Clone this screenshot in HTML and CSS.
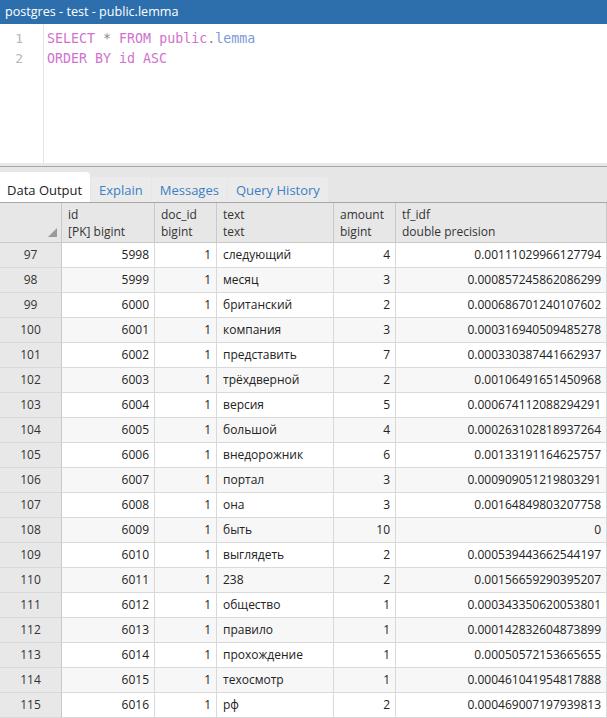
FILE: index.html
```html
<!DOCTYPE html>
<html>
<head>
<meta charset="utf-8">
<link rel="stylesheet" href="styles.css">
</head>
<body>
<div class="title">postgres - test - public.lemma</div>
<div class="editor">
  <div class="gutter"><div>1</div><div>2</div></div>
  <div class="code">
    <div class="line"><span class="kw">SELECT</span> <span class="op">*</span> <span class="kw">FROM</span> <span class="kw">public</span><span class="op">.</span><span class="ident">lemma</span></div>
    <div class="line"><span class="kw">ORDER</span> <span class="kw">BY</span> <span class="kw">id</span> <span class="kw">ASC</span></div>
  </div>
</div>
<div class="sep"></div>
<div class="tabs">
  <div class="tab active">Data Output</div>
  <div class="tab">Explain</div>
  <div class="tab">Messages</div>
  <div class="tab">Query History</div>
</div>
<div class="grid">
  <div class="row head">
    <div class="c corner"><svg width="9" height="9" viewBox="0 0 9 9"><polygon points="9,0 9,9 0,9" fill="#9a9a9a"/></svg></div>
    <div class="c"><div>id</div><div>[PK] bigint</div></div>
    <div class="c"><div>doc_id</div><div>bigint</div></div>
    <div class="c"><div>text</div><div>text</div></div>
    <div class="c"><div>amount</div><div>bigint</div></div>
    <div class="c"><div>tf_idf</div><div>double precision</div></div>
  </div>
  <div class="row"><div class="c n">97</div><div class="c r">5998</div><div class="c r">1</div><div class="c">следующий</div><div class="c r">4</div><div class="c r">0.00111029966127794</div></div>
  <div class="row alt"><div class="c n">98</div><div class="c r">5999</div><div class="c r">1</div><div class="c">месяц</div><div class="c r">3</div><div class="c r">0.000857245862086299</div></div>
  <div class="row"><div class="c n">99</div><div class="c r">6000</div><div class="c r">1</div><div class="c">британский</div><div class="c r">2</div><div class="c r">0.000686701240107602</div></div>
  <div class="row alt"><div class="c n">100</div><div class="c r">6001</div><div class="c r">1</div><div class="c">компания</div><div class="c r">3</div><div class="c r">0.000316940509485278</div></div>
  <div class="row"><div class="c n">101</div><div class="c r">6002</div><div class="c r">1</div><div class="c">представить</div><div class="c r">7</div><div class="c r">0.000330387441662937</div></div>
  <div class="row alt"><div class="c n">102</div><div class="c r">6003</div><div class="c r">1</div><div class="c">трёхдверной</div><div class="c r">2</div><div class="c r">0.00106491651450968</div></div>
  <div class="row"><div class="c n">103</div><div class="c r">6004</div><div class="c r">1</div><div class="c">версия</div><div class="c r">5</div><div class="c r">0.000674112088294291</div></div>
  <div class="row alt"><div class="c n">104</div><div class="c r">6005</div><div class="c r">1</div><div class="c">большой</div><div class="c r">4</div><div class="c r">0.000263102818937264</div></div>
  <div class="row"><div class="c n">105</div><div class="c r">6006</div><div class="c r">1</div><div class="c">внедорожник</div><div class="c r">6</div><div class="c r">0.00133191164625757</div></div>
  <div class="row alt"><div class="c n">106</div><div class="c r">6007</div><div class="c r">1</div><div class="c">портал</div><div class="c r">3</div><div class="c r">0.000909051219803291</div></div>
  <div class="row"><div class="c n">107</div><div class="c r">6008</div><div class="c r">1</div><div class="c">она</div><div class="c r">3</div><div class="c r">0.00164849803207758</div></div>
  <div class="row alt"><div class="c n">108</div><div class="c r">6009</div><div class="c r">1</div><div class="c">быть</div><div class="c r">10</div><div class="c r">0</div></div>
  <div class="row"><div class="c n">109</div><div class="c r">6010</div><div class="c r">1</div><div class="c">выглядеть</div><div class="c r">2</div><div class="c r">0.000539443662544197</div></div>
  <div class="row alt"><div class="c n">110</div><div class="c r">6011</div><div class="c r">1</div><div class="c">238</div><div class="c r">2</div><div class="c r">0.00156659290395207</div></div>
  <div class="row"><div class="c n">111</div><div class="c r">6012</div><div class="c r">1</div><div class="c">общество</div><div class="c r">1</div><div class="c r">0.000343350620053801</div></div>
  <div class="row alt"><div class="c n">112</div><div class="c r">6013</div><div class="c r">1</div><div class="c">правило</div><div class="c r">1</div><div class="c r">0.000142832604873899</div></div>
  <div class="row"><div class="c n">113</div><div class="c r">6014</div><div class="c r">1</div><div class="c">прохождение</div><div class="c r">1</div><div class="c r">0.00050572153665655</div></div>
  <div class="row alt"><div class="c n">114</div><div class="c r">6015</div><div class="c r">1</div><div class="c">техосмотр</div><div class="c r">1</div><div class="c r">0.000461041954817888</div></div>
  <div class="row"><div class="c n">115</div><div class="c r">6016</div><div class="c r">1</div><div class="c">рф</div><div class="c r">2</div><div class="c r">0.000469007197939813</div></div>
</div>
</body>
</html>
```

FILE: styles.css
```css
* { box-sizing: border-box; }
html, body { margin: 0; padding: 0; }
body {
  width: 607px;
  height: 718px;
  overflow: hidden;
  font-family: "Open Sans", "Liberation Sans", sans-serif;
  background: #fff;
  color: #222;
}
.title {
  height: 24px;
  background: #2d6fad;
  color: #fff;
  font-size: 12.6px;
  line-height: 24px;
  padding-left: 5px;
}
.editor {
  height: 139px;
  display: flex;
  background: #fff;
}
.gutter {
  width: 44px;
  border-right: 1px solid #e4e4e4;
  padding-top: 5px;
  padding-right: 20px;
  text-align: right;
  color: #b5b5b5;
  font-family: "DejaVu Sans Mono", "Liberation Mono", monospace;
  font-size: 13px;
  line-height: 20px;
}
.code {
  padding-top: 5px;
  padding-left: 3px;
  font-family: "DejaVu Sans Mono", "Liberation Mono", monospace;
  font-size: 13.3px;
  line-height: 20px;
}
.line { white-space: pre; height: 20px; }
.kw { color: #cf73cc; }
.op { color: #888; }
.ident { color: #7d9ad8; }
.sep {
  height: 3px;
  background: #e8e8e8;
}
.tabs {
  height: 37px;
  background: #e6e6e6;
  border-top: 1px solid #a6a6a6;
  border-bottom: 1px solid #a6a6a6;
  display: flex;
  align-items: flex-end;
  font-size: 13px;
}
.tab {
  height: 25px;
  line-height: 20px;
  padding: 3px 8px 0 8px;
  margin-right: 1px;
  color: #3b7fc4;
  background: #ebebeb;
  border-radius: 3px 3px 0 0;
}
.tab.active {
  height: 30px;
  width: 90px;
  padding: 8px 0 0 7px;
  color: #222;
  background: #fff;
  border-radius: 0 4px 0 0;
}
.grid {
  font-size: 12px;
}
.row {
  display: grid;
  grid-template-columns: 62px 93px 62px 117px 62px 211px;
  height: 25px;
}
.row.alt .c { background: #f7f7f7; }
.c {
  border-right: 1px solid #d9d9d9;
  border-bottom: 1px solid #d9d9d9;
  padding: 0 6px;
  line-height: 24px;
  white-space: nowrap;
  overflow: hidden;
  background: #fff;
}
.c.r { text-align: right; padding-right: 5px; }
.row .c.n, .row.alt .c.n {
  background: #e8e8e8;
  text-align: center;
  color: #333;
  border-right-color: #c8c8c8;
}
.row.head { height: 40px; }
.row.head .c {
  background: #e7e7e7;
  line-height: 17px;
  display: flex;
  flex-direction: column;
  justify-content: center;
  border-right-color: #c9c9c9;
  border-bottom-color: #c9c9c9;
  color: #333;
}
.row.head .c.corner {
  flex-direction: row;
  justify-content: flex-end;
  align-items: flex-end;
  padding: 0 4px 5px 0;
}
.corner svg { display: block; }
```
